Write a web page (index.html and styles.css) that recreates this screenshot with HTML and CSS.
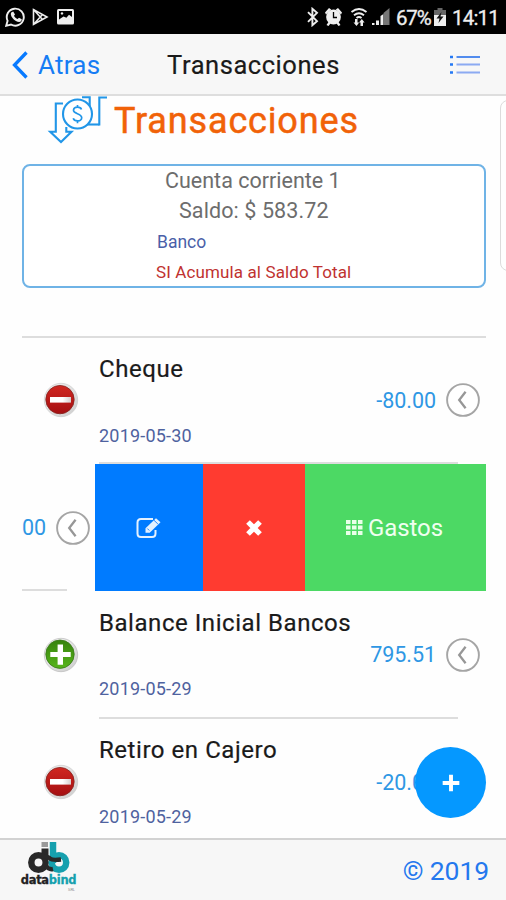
FILE: index.html
```html
<!DOCTYPE html>
<html lang="es">
<head>
<meta charset="utf-8">
<title>Transacciones</title>
<link rel="stylesheet" href="styles.css">
</head>
<body>
<svg width="0" height="0" class="defs" aria-hidden="true">
  <defs>
    <linearGradient id="redFill" x1="0" y1="0" x2="0" y2="1"><stop offset="0" stop-color="#d02720"/><stop offset="1" stop-color="#a50f12"/></linearGradient>
    <linearGradient id="greenFill" x1="0" y1="0" x2="0" y2="1"><stop offset="0" stop-color="#35820d"/><stop offset="1" stop-color="#58b51b"/></linearGradient>
    <linearGradient id="rim" x1="0" y1="0" x2="1" y2="1"><stop offset="0" stop-color="#f5f5f5"/><stop offset="1" stop-color="#ccc"/></linearGradient>
    <linearGradient id="bar" x1="0" y1="0" x2="1" y2="0"><stop offset="0" stop-color="#fff"/><stop offset=".6" stop-color="#fff"/><stop offset="1" stop-color="#d5cdcd"/></linearGradient>
    <symbol id="minus" viewBox="0 0 36 36"><circle cx="18" cy="18" r="16.7" fill="url(#rim)" stroke="#ccc" stroke-width=".7"/><circle cx="17" cy="17.6" r="14.2" fill="url(#redFill)" stroke="#842421" stroke-width=".8"/><rect x="7" y="15" width="21" height="5.6" fill="url(#bar)"/></symbol>
    <symbol id="plus" viewBox="0 0 36 36"><circle cx="18" cy="18" r="16.7" fill="url(#rim)" stroke="#bbb" stroke-width=".7"/><circle cx="17" cy="17.2" r="14.2" fill="url(#greenFill)" stroke="#38771a" stroke-width=".8"/><path d="M14.6 7.500h5.400v7.400h7.700v5.200H20v7.600h-5.400v-7.600H7.300v-5.200h7.300z" fill="#fff"/></symbol>
    <symbol id="back" viewBox="0 0 34 34"><circle cx="17" cy="17" r="15.900" fill="#fff" stroke="#a5a5a5" stroke-width="1.900"/><path d="M19.600 8.800l-6.400 8.200 6.400 8.200" fill="none" stroke="#979797" stroke-width="2.300"/></symbol>
  </defs>
</svg>

<header class="status">
  <div class="notices">
    <svg width="70" height="22" viewBox="0 0 70 22" fill="none">
      <path d="M1.200 19.800l1.400-5A8.500 8.500 0 1 1 6 18.500z" stroke="#eee" stroke-width="1.900"/>
      <path d="M6.500 6.200l1.700-.8 1.800 3-1 1.400c.9 1.700 2 2.600 3.600 3.300l1.400-1.300 2.800 1.500-.5 1.800c-1.400 1.400-3.500 1-5.400-.2-2.700-1.600-4.600-3.900-5-6.200-.2-1 .1-1.900.6-2.500z" fill="#eee"/>
      <path d="M28.500 3.500v15l13.500-7.500zM28.500 3.500l9 10M28.500 18.500l9-10" stroke="#eee" stroke-width="1.600"/>
      <rect x="52" y="3" width="17" height="15.500" rx="1.500" fill="#eee"/><path d="M54 5h13v6l-3-2.200-2.600 3-2.900-1.400-4.500 3z" fill="#000"/><circle cx="57" cy="7.400" r="1.200" fill="#eee"/>
    </svg>
  </div>
  <div class="indicators">
    <svg width="84" height="20" viewBox="0 0 84 20" fill="none">
      <path d="M2 5.200l9 9-4.600 4V1.800l4.600 4-9 9" stroke="#eee" stroke-width="1.900"/>
      <g fill="#eee"><circle cx="27.500" cy="10" r="7.400"/><path d="M19 5.500L23 1l2.200 1.500L20 7.500zM36 5.500L32 1l-2.200 1.500L35 7.500zM20.500 18l2-3 2 1.600L22.500 19zM34.500 18l-2-3-2 1.600 2 2.400z"/></g>
      <path d="M27.500 5v5.500h3.500" stroke="#000" stroke-width="1.300"/>
      <path d="M45.500 5q7.500-6 15 0M48 8.200q5-4 10 0M50.500 11q2.500-2 5 0" stroke="#eee" stroke-width="1.900"/>
      <path d="M49 12h2.500v3.500h1.700L50.500 19l-3-3.500H49zM54.500 19v-3.500h-1.500l2.800-3.500 2.800 3.500H57V19z" fill="#eee"/>
      <path d="M66 18v-2h2.500v2zM70 18v-4.500h3V18zM74.500 18V9l3-2v11z" fill="#eee"/><path d="M77.500 18V6l6-5v17z" fill="#777"/>
    </svg>
    <span class="pct">67%</span>
    <svg width="12" height="18" viewBox="0 0 12 18"><path d="M3.500 0h5v2H12v6H0V2h3.500z" fill="#666"/><path d="M0 7h12v11H0z" fill="#eee"/><path d="M7.500 4L2.500 10.500h3L4.500 15 9.500 8.500h-3z" fill="#111"/></svg>
    <span class="clock">14:11</span>
  </div>
</header>

<nav class="navbar">
  <a class="atras"><svg width="18" height="28" viewBox="0 0 18 28"><path d="M15.500 1.500L3.500 14l12 12.500" fill="none" stroke="#087aff" stroke-width="3.300"/></svg><span>Atras</span></a>
  <h1>Transacciones</h1>
  <svg class="menu" width="31" height="20" viewBox="0 0 31 20"><path d="M0 2h3M0 9.500h3M0 17.500h3" stroke="#2479f5" stroke-width="2.600"/><path d="M6.500 2H30" stroke="#3f7fec" stroke-width="1.800"/><path d="M6.500 9.500H30M6.500 17.500H30" stroke="#8caaf2" stroke-width="1.800"/></svg>
</nav>

<main>
  <div class="sidetab"></div>
  <div class="heading">
    <svg width="62" height="48" viewBox="0 0 62 48" fill="none" stroke="#2196e8" stroke-width="2.100">
      <path d="M18 7.500H10.800v28.200H5.200L16 46 26.500 35.700h-5.200V31"/><path d="M37 1.300h7.700v10M54.300 29.500V1.500H62"/><path d="M54.300 28.500H41"/>
      <circle cx="32.500" cy="18" r="14.500" fill="#fff"/><path d="M36.500 13.500c-1-3-7.500-3.300-8 .5-.4 4 8.300 3.400 8.200 7.700-.2 4-7.200 4.300-8.500.5M32.500 9v2.500M32.500 24.800v2.500" stroke-width="1.700"/>
    </svg>
    <h2>Transacciones</h2>
  </div>
  <section class="account">
    <p class="name">Cuenta corriente 1</p>
    <p class="balance">Saldo: $ 583.72</p>
    <p class="type">Banco</p>
    <p class="sum">SI Acumula al Saldo Total</p>
  </section>

  <ul class="list">
    <li class="row">
      <svg class="sign"><use href="#minus"/></svg>
      <div class="info"><h3>Cheque</h3><time>2019-05-30</time></div>
      <span class="amount">-80.00</span><svg class="back"><use href="#back"/></svg>
    </li>
    <li class="row swiped">
      <div class="rest"><span class="amount">00</span><svg class="back"><use href="#back"/></svg></div>
      <div class="actions">
        <a class="edit"><svg width="25" height="22" viewBox="0 0 25 22" fill="none"><path d="M17 2H5Q1.500 2 1.500 5.500v11Q1.500 20 5 20h11q3.500 0 3.500-3.500V13" stroke="#e4f1ff" stroke-width="2"/><path d="M9.500 11.200L20 1.200l4.500 4-10.800 10.600H9.500z" fill="#e4f1ff"/><path d="M18 3.300l3.900 3.700M11.300 11.500l2 2" stroke="#2488ff" stroke-width="1"/></svg></a>
        <a class="del"><svg width="18" height="18" viewBox="0 0 18 18"><path d="M3 3l12 12M15 3L3 15" stroke="#fff" stroke-width="5.200"/></svg></a>
        <a class="gastos"><svg width="17" height="17" viewBox="0 0 17 17" fill="#e9ffe9"><path d="M0 1h4.500v4H0zM6 1h4.500v4H6zM12 1h4.500v4H12zM0 6.500h4.500v4H0zM6 6.500h4.500v4H6zM12 6.500h4.500v4H12zM0 12h4.500v4H0zM6 12h4.500v4H6zM12 12h4.500v4H12z"/></svg><span>Gastos</span></a>
      </div>
    </li>
    <li class="row after-swiped">
      <svg class="sign"><use href="#plus"/></svg>
      <div class="info"><h3>Balance Inicial Bancos</h3><time>2019-05-29</time></div>
      <span class="amount">795.51</span><svg class="back"><use href="#back"/></svg>
    </li>
    <li class="row">
      <svg class="sign"><use href="#minus"/></svg>
      <div class="info"><h3>Retiro en Cajero</h3><time>2019-05-29</time></div>
      <span class="amount">-20.00</span><svg class="back"><use href="#back"/></svg>
    </li>
  </ul>
  <a class="fab"><svg width="18" height="18" viewBox="0 0 18 18"><path d="M9 1.500v15M1.500 9h15" stroke="#fff" stroke-width="4.600" stroke-linecap="square" transform="translate(1.350 1.350) scale(.85)"/></svg></a>
</main>

<footer>
  <div class="brand">
    <svg width="42" height="32" viewBox="0 0 42 32" fill="none">
      <path d="M13.500 2.500h6.500" stroke="#999" stroke-width="5"/><path d="M13.500 6.500h7v10h-7z" fill="#292929"/>
      <circle cx="10.500" cy="20.500" r="7.200" stroke="#292929" stroke-width="6.500"/>
      <path d="M25 0v21" stroke="#16a0ae" stroke-width="6.500"/><circle cx="31" cy="20.500" r="7.200" stroke="#16a0ae" stroke-width="6.500"/>
      <path d="M15 14.500q5 0 7 2t11 1" stroke="#292929" stroke-width="4.500"/><path d="M18 24q3 4 7 3" stroke="#292929" stroke-width="4.500"/>
    </svg>
    <span class="word">data<b>bind</b></span>
    <span class="tiny">SRL</span>
  </div>
  <span class="copy">© 2019</span>
</footer>
</body>
</html>
```

FILE: styles.css
```css
* { box-sizing: border-box; }
body { margin: 0; width: 506px; height: 900px; overflow: hidden; display: flex; flex-direction: column; background: #fefefe; font-family: Roboto, "Liberation Sans", sans-serif; color: #1a1a1a; }
h1, h2, h3, p, ul { margin: 0; padding: 0; font-weight: 400; white-space: nowrap; }
svg { display: block; flex: none; }
.defs { position: absolute; }

.status { height: 34px; flex: none; background: #000; color: #eee; display: flex; justify-content: space-between; align-items: center; padding: 0 8px 0 5px; }
.indicators { display: flex; align-items: center; }
.pct { font-size: 20.500px; width: 34px; margin: 1px 4px 0 6px; letter-spacing: -1.100px; -webkit-text-stroke: .3px #eee; }
.clock { font-size: 20.500px; margin: 1px -1px 0 6px; letter-spacing: -.8px; -webkit-text-stroke: .3px #eee; }

.navbar { height: 62px; flex: none; background: #f7f7f7; border-bottom: 2px solid #dedede; display: grid; grid-template-columns: 156px 195px 1fr; align-items: center; padding-top: 2px; }
.atras { display: flex; align-items: center; gap: 9px; padding-left: 11px; color: #167cf4; font-size: 26px; letter-spacing: .25px; }
h1 { text-align: center; font-size: 25.500px; letter-spacing: .55px; -webkit-text-stroke: .2px #1a1a1a; }
.menu { margin-left: 99px; }

main { height: 742px; flex: none; position: relative; overflow: hidden; }
.sidetab { position: absolute; left: 500px; top: 4px; width: 20px; height: 171px; border: 1.500px solid #dcdcdc; border-radius: 8px; }
.heading { display: flex; height: 68px; padding-left: 45px; }
h2 { margin-left: 7px; padding-top: 3px; font-size: 36px; line-height: 44px; letter-spacing: .85px; color: #f16208; -webkit-text-stroke: .5px #f16208; }
.account { width: 464px; height: 124px; margin-left: 22px; border: 2px solid #6fb3e6; border-radius: 8px; background: #fff; padding: 0 0 0 133px; }
.account p { line-height: 30px; }
.account .name { font-size: 21.500px; color: #6d6d6d; padding-left: 8px; letter-spacing: 0; }
.account .balance { font-size: 21.500px; color: #6d6d6d; padding-left: 22px; letter-spacing: .1px; }
.account .type { font-size: 17.500px; color: #4a5fa8; line-height: 32px; }
.account .sum { font-size: 17px; color: #c03230; line-height: 28px; letter-spacing: .12px; margin-left: -1px; }

.list { list-style: none; width: 464px; margin: 48px 0 0 22px; border-top: 2px solid #ddd; }
.row { height: 127.250px; display: flex; align-items: center; position: relative; padding: 0 6px 0 0; }
.row:first-child { height: 126px; padding-bottom: 2px; }
.row + .row::before { content: ""; position: absolute; left: 77px; right: 28px; top: -2px; height: 2px; background: #ddd; }
.row.after-swiped::before { content: none; }
.sign { width: 36px; height: 36px; margin: 0 19px 0 21px; }
.info { width: 254px; height: 100%; padding-top: 14px; display: flex; flex-direction: column; }
.swiped ~ .row .info { padding-top: 14.500px; }
h3 { font-size: 24px; line-height: 34px; letter-spacing: .55px; margin-left: 1px; -webkit-text-stroke: .2px #1a1a1a; }
time { font-size: 18px; line-height: 24px; margin: 37.500px 0 0 1px; color: #4f629f; letter-spacing: .2px; }
.amount { font-size: 21.500px; color: #2e97e4; margin-left: auto; margin-right: 10px; letter-spacing: -.05px; }
.back { width: 34px; height: 34px; }
.row.swiped { padding: 0; }
.rest { width: 72px; margin-right: 1px; height: 100%; display: flex; align-items: center; position: relative; }
.rest::after { content: ""; position: absolute; left: 0; bottom: 0; width: 45px; height: 2px; background: #ddd; }
.rest .amount { margin: 0 auto 0 0; }
.actions { display: flex; flex: 1; height: 100%; position: relative; color: #efffef; }
.actions a { display: flex; align-items: center; justify-content: center; }
.edit { width: 108px; background: #007bff; padding-right: 2px; }
.del { width: 102px; background: #ff3b30; }
.gastos { flex: 1; background: #4cd964; font-size: 24px; gap: 5px; padding-right: 2px; }
.gastos span { letter-spacing: -.1px; }
.rest .back { margin-right: 5px; }
.rest, .row.swiped .rest { width: 73px; margin-right: 0; padding-right: 0; }
.fab { position: absolute; left: 415px; top: 651px; width: 71px; height: 71px; border-radius: 50%; background: #0598ff; display: flex; align-items: center; justify-content: center; }

footer { height: 62px; flex: none; border-top: 2px solid #d2d2d2; background: #f7f7f7; display: flex; justify-content: space-between; align-items: center; padding: 0 17px 0 20px; }
.brand { width: 57px; height: 100%; padding-top: 2px; display: flex; flex-direction: column; align-items: center; }
.word { font: bold 11.500px/13px "DejaVu Sans", sans-serif; letter-spacing: -.3px; color: #222; -webkit-text-stroke: .3px; }
.word b { color: #16a0ae; }
.tiny { font-size: 4px; line-height: 5px; color: #888; align-self: flex-end; margin-right: 2px; }
.copy { font-size: 26.500px; color: #2478ee; letter-spacing: -.1px; }
```
